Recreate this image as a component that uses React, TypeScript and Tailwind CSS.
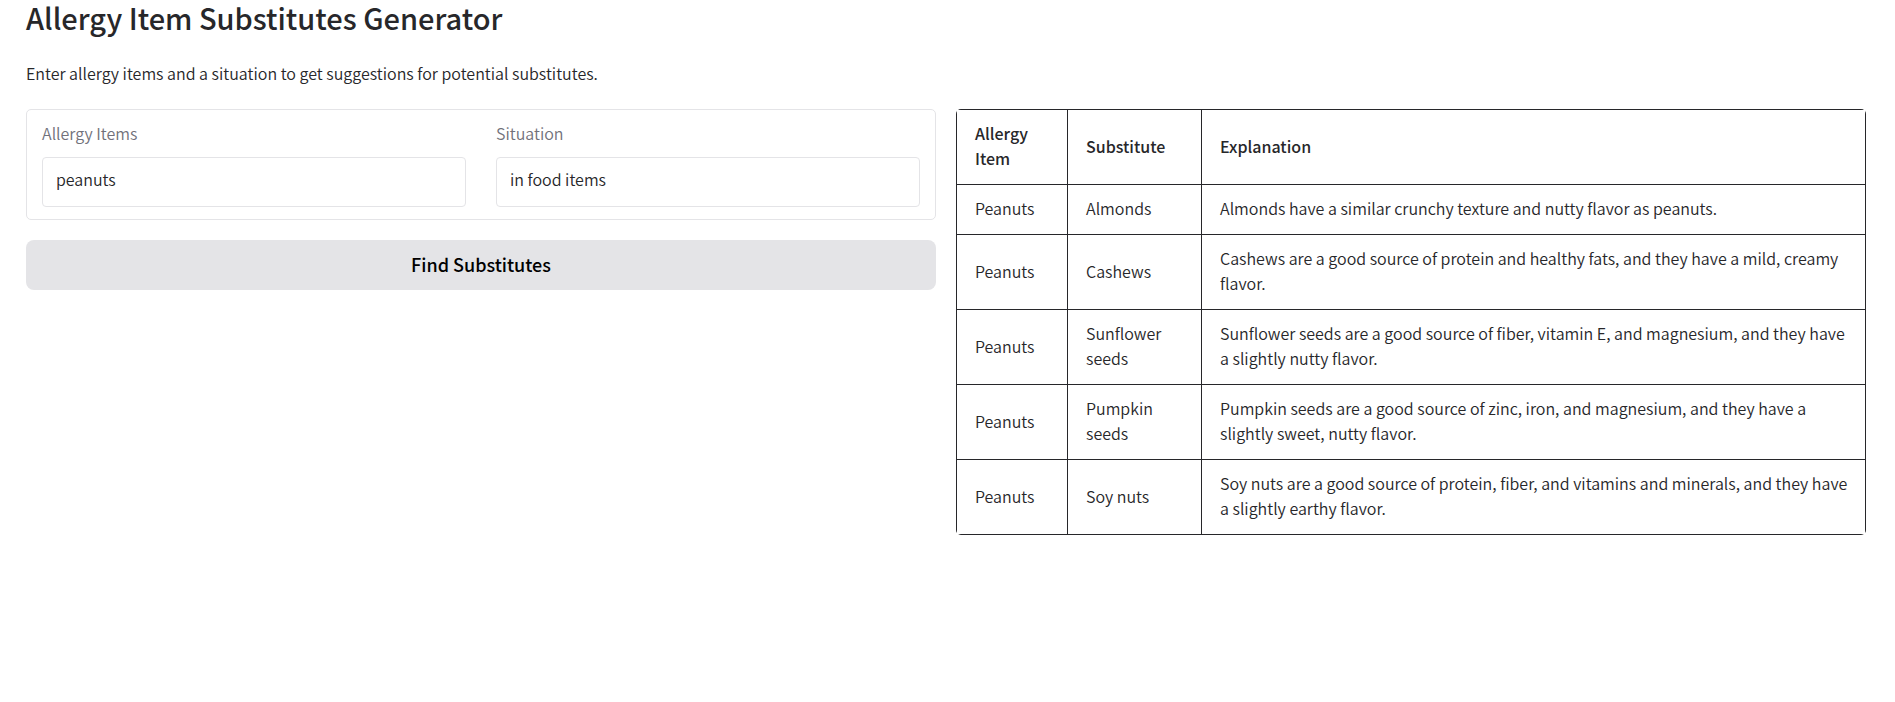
import { useState } from "react";

type Row = { item: string; substitute: string; explanation: string };

const rows: Row[] = [
  { item: "Peanuts", substitute: "Almonds", explanation: "Almonds have a similar crunchy texture and nutty flavor as peanuts." },
  { item: "Peanuts", substitute: "Cashews", explanation: "Cashews are a good source of protein and healthy fats, and they have a mild, creamy flavor." },
  { item: "Peanuts", substitute: "Sunflower seeds", explanation: "Sunflower seeds are a good source of fiber, vitamin E, and magnesium, and they have a slightly nutty flavor." },
  { item: "Peanuts", substitute: "Pumpkin seeds", explanation: "Pumpkin seeds are a good source of zinc, iron, and magnesium, and they have a slightly sweet, nutty flavor." },
  { item: "Peanuts", substitute: "Soy nuts", explanation: "Soy nuts are a good source of protein, fiber, and vitamins and minerals, and they have a slightly earthy flavor." },
];

type FieldProps = { id: string; label: string; value: string; onChange: (value: string) => void };

function Field({ id, label, value, onChange }: FieldProps) {
  return (
    <div className="flex min-w-0 flex-1 flex-col gap-3">
      <label htmlFor={id} className="leading-6 text-[#71717a]">{label}</label>
      <input
        id={id}
        type="text"
        value={value}
        onChange={(e) => onChange(e.target.value)}
        className="h-[50px] w-full rounded border border-[#e4e4e7] bg-white px-[13px] pb-1.5 text-[#27272a]"
      />
    </div>
  );
}

const cell = "border border-[#27272a] pt-[11px] pr-3 pb-[13px] pl-[18px] text-left align-middle";

export default function App() {
  const [items, setItems] = useState("peanuts");
  const [situation, setSituation] = useState("in food items");

  return (
    <main className="min-h-screen bg-white pr-[29px] pl-[26px] font-['Noto_Sans_CJK_SC',sans-serif] text-base leading-[25px] font-[350] text-[#27272a]">
      <h1 className="text-[29px] leading-[34px] font-medium">Allergy Item Substitutes Generator</h1>
      <p className="mt-[27px] mb-[23px]">Enter allergy items and a situation to get suggestions for potential substitutes.</p>
      <div className="grid grid-cols-2 items-start gap-5">
        <form className="flex min-w-0 flex-col gap-5" onSubmit={(e) => e.preventDefault()}>
          <div className="flex gap-[30px] rounded-[5px] border border-[#e4e4e7] px-[15px] pt-[11px] pb-3">
            <Field id="items" label="Allergy Items" value={items} onChange={setItems} />
            <Field id="situation" label="Situation" value={situation} onChange={setSituation} />
          </div>
          <button type="submit" className="h-[50px] rounded-lg bg-[#e4e4e7] pb-0.5 text-lg font-medium text-black">
            Find Substitutes
          </button>
        </form>
        <div className="min-w-0 overflow-hidden rounded-[5px]">
          <table className="w-full table-fixed border-collapse">
            <colgroup>
              <col className="w-[111px]" />
              <col className="w-[134px]" />
              <col />
            </colgroup>
            <thead>
              <tr>
                <th className={cell + " font-medium"}>Allergy Item</th>
                <th className={cell + " font-medium"}>Substitute</th>
                <th className={cell + " font-medium"}>Explanation</th>
              </tr>
            </thead>
            <tbody>
              {rows.map((row) => (
                <tr key={row.substitute}>
                  <td className={cell}>{row.item}</td>
                  <td className={cell}>{row.substitute}</td>
                  <td className={cell}>{row.explanation}</td>
                </tr>
              ))}
            </tbody>
          </table>
        </div>
      </div>
    </main>
  );
}
